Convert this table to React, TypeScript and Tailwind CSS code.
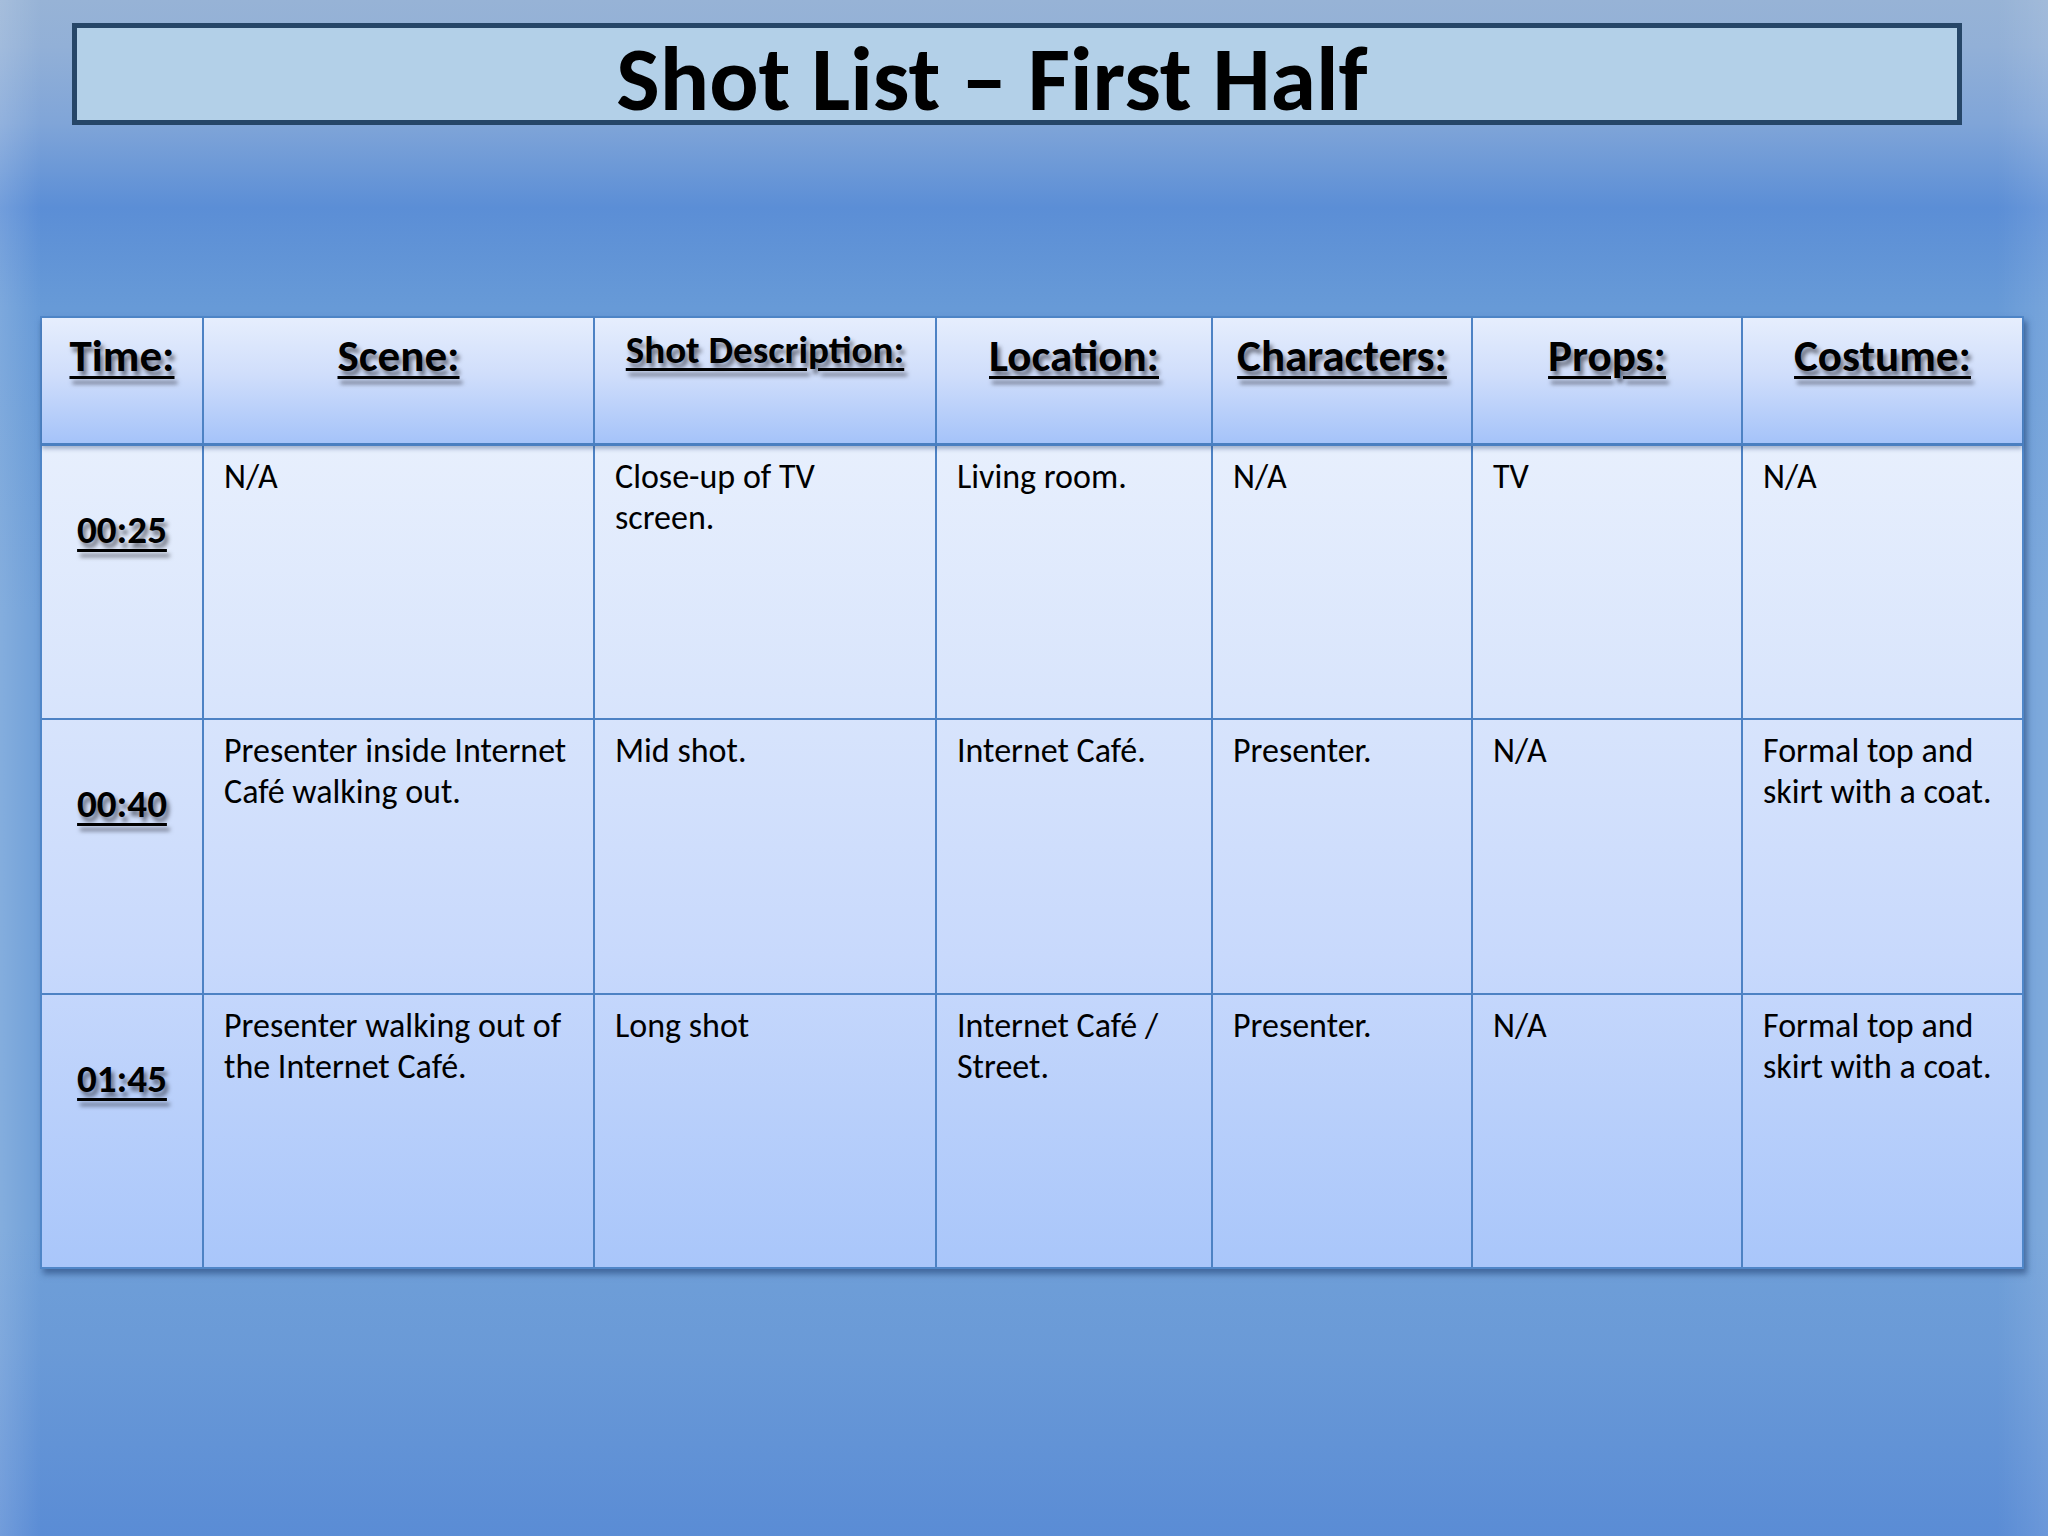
const font = "font-['Carlito','Calibri','Lato',sans-serif]";

const headers = [
  { label: "Time:", small: false },
  { label: "Scene:", small: false },
  { label: "Shot Description:", small: true },
  { label: "Location:", small: false },
  { label: "Characters:", small: false },
  { label: "Props:", small: false },
  { label: "Costume:", small: false },
];

const rows: { time: string; cells: string[][]; h: string }[] = [
  {
    time: "00:25",
    h: "h-[274px]",
    cells: [["N/A"], ["Close-up of TV", "screen."], ["Living room."], ["N/A"], ["TV"], ["N/A"]],
  },
  {
    time: "00:40",
    h: "h-[275px]",
    cells: [
      ["Presenter inside Internet", "Café walking out."],
      ["Mid shot."],
      ["Internet Café."],
      ["Presenter."],
      ["N/A"],
      ["Formal top and", "skirt with a coat."],
    ],
  },
  {
    time: "01:45",
    h: "h-[272px]",
    cells: [
      ["Presenter walking out of", "the Internet Café."],
      ["Long shot"],
      ["Internet Café /", "Street."],
      ["Presenter."],
      ["N/A"],
      ["Formal top and", "skirt with a coat."],
    ],
  },
];

const cols = "grid grid-cols-[162px_391px_342px_276px_260px_270px_279px]";
const shadowText = "underline decoration-[3px] underline-offset-[5px] [text-shadow:3px_5px_4px_rgba(20,20,30,0.55)]";

export default function App() {
  return (
    <div
      className={`${font} relative w-[2048px] h-[1536px] overflow-hidden bg-[linear-gradient(to_bottom,#97b3d6_0%,#92b0d7_3%,#80a5d8_8%,#5b8ed6_13.5%,#679ad7_20%,#70a0d8_40%,#70a0d8_80%,#6a9ad7_88%,#5a8cd5_100%)] text-black`}
    >
      <div className="absolute inset-0 pointer-events-none bg-[linear-gradient(to_right,rgba(255,255,255,0.14)_0%,rgba(255,255,255,0)_2%,rgba(255,255,255,0)_97.5%,rgba(255,255,255,0.1)_100%)]" />

      <div className="relative flex flex-col">
        {/* title */}
        <div className="ml-[72px] mt-[23px] w-[1890px] h-[102px] border-[5px] border-[#264668] bg-[#b3d0e8] flex justify-center items-start pr-[50px] pt-[11px]">
          <h1 className="text-[92px] leading-[80px] font-bold">Shot List – First Half</h1>
        </div>

        {/* table */}
        <div className="ml-[40px] mt-[191px] w-[1984px] border-2 border-[#4f86c8] shadow-[3px_5px_6px_rgba(30,60,110,0.55)]">
          <div className={`${cols} h-[128px] border-b-[3px] border-[#4a7fc1] bg-[linear-gradient(to_bottom,#e6eefd,#d0defb_45%,#a5c3f9)] shadow-[0_3px_4px_rgba(40,70,120,0.35)] relative`}>
            {headers.map((h, i) => (
              <div
                key={h.label}
                className={`flex justify-center ${i < 6 ? "border-r-2 border-[#4d82c4]" : ""} ${h.small ? "pt-[8px]" : "pt-[11px]"}`}
              >
                <span
                  className={`font-bold ${shadowText} ${h.small ? "text-[39px] leading-[47px]" : "text-[45px] leading-[54px]"}`}
                >
                  {h.label}
                </span>
              </div>
            ))}
          </div>

          <div className="bg-[linear-gradient(to_bottom,#e7effd_0%,#d9e5fc_30%,#c8d9fc_62%,#a9c6fa_100%)]">
            {rows.map((r, ri) => (
              <div key={r.time} className={`${cols} ${r.h} ${ri < 2 ? "border-b-2 border-[#4d82c4]" : ""}`}>
                <div className="flex justify-center pt-[60px] border-r-2 border-[#4d82c4]">
                  <span className={`font-bold text-[39px] leading-[47px] ${shadowText} underline-offset-[6px]`}>{r.time}</span>
                </div>
                {r.cells.map((lines, ci) => (
                  <div
                    key={ci}
                    className={`pl-[20px] pt-[10px] text-[34px] leading-[41px] ${ci < 5 ? "border-r-2 border-[#4d82c4]" : ""}`}
                  >
                    {lines.map((l) => (
                      <div key={l} className="whitespace-nowrap">
                        {l}
                      </div>
                    ))}
                  </div>
                ))}
              </div>
            ))}
          </div>
        </div>
      </div>
    </div>
  );
}
